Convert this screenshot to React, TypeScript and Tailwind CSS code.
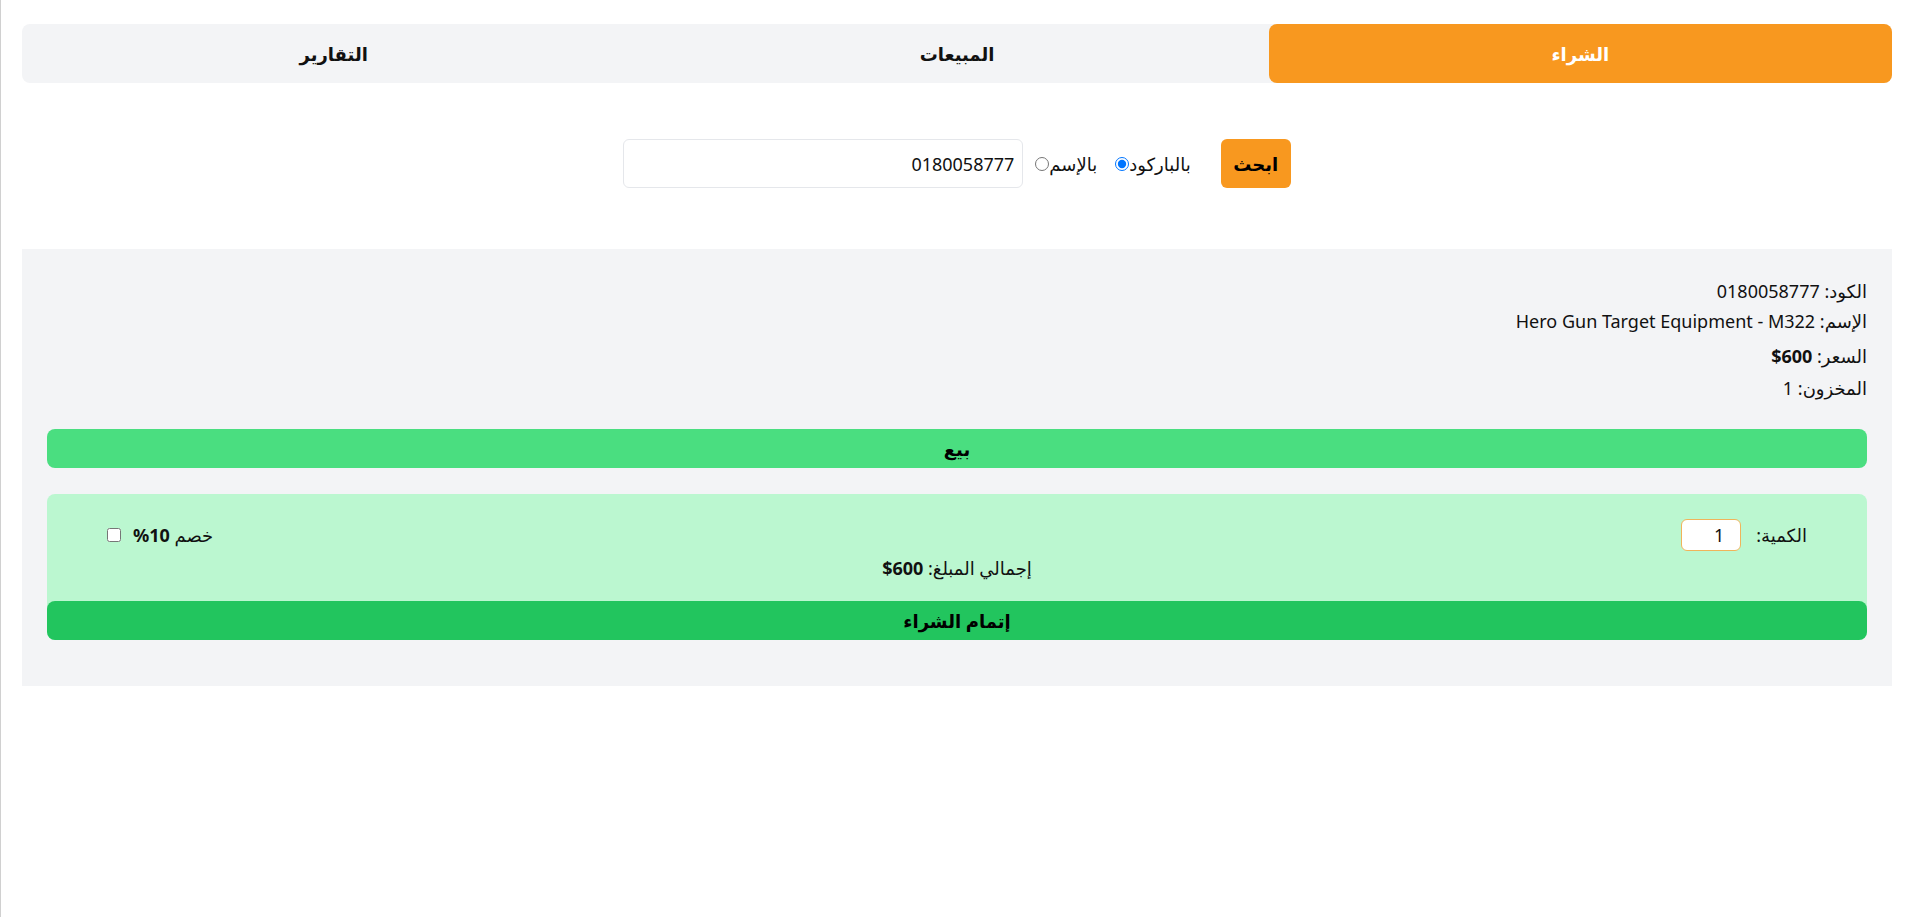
import React from "react";

export default function App() {
  return (
    <div
      dir="rtl"
      className="min-h-screen border-l border-[#d0d0d0] bg-white pl-[21px] pr-6 pt-6 text-[#111]"
      style={{ fontFamily: '"Noto Sans", "DejaVu Sans", sans-serif' }}
    >
      {/* Tabs */}
      <div className="flex h-[59px] rounded-lg bg-[#f3f4f6]">
        <button className="flex-1 rounded-lg bg-[#f8981f] text-lg font-bold text-white">الشراء</button>
        <button className="flex-1 text-lg font-bold text-[#111]">المبيعات</button>
        <button className="flex-1 text-lg font-bold text-[#111]">التقارير</button>
      </div>

      {/* Search */}
      <div className="mt-[56px] flex h-[49px] items-center justify-center">
        <button className="h-[49px] w-[70px] rounded-md bg-[#f8981f] text-lg font-bold text-black">ابحث</button>
        <label className="mr-[30px] flex items-center text-lg">
          بالباركود
          <input type="radio" name="mode" defaultChecked className="h-[14px] w-[14px]" />
        </label>
        <label className="mr-[18px] flex items-center text-lg">
          بالإسم
          <input type="radio" name="mode" className="h-[14px] w-[14px]" />
        </label>
        <input
          type="text"
          defaultValue="0180058777"
          className="mr-3 h-[49px] w-[400px] rounded-md border border-[#e5e7eb] bg-white px-2 text-lg outline-none"
        />
      </div>

      {/* Product panel */}
      <div className="mt-[61px] bg-[#f3f4f6] px-[25px] pb-[46px] pt-[27px]">
        <div className="text-lg">
          <p className="h-[30px] leading-[30px]">الكود: 0180058777</p>
          <p className="h-[30px] leading-[30px]">الإسم: Hero Gun Target Equipment - M322</p>
          <p className="mt-[5px] h-[30px] leading-[30px]">
            السعر: <span className="font-bold">600$</span>
          </p>
          <p className="mt-[2px] h-[30px] leading-[30px]">المخزون: 1</p>
        </div>

        <button className="mt-[26px] h-[39px] w-full rounded-lg bg-[#4ade80] text-lg font-bold text-black">بيع</button>

        <div className="mt-[26px] rounded-lg bg-[#bbf7d0] pt-[25px]">
          <div className="flex h-8 items-center justify-between px-[60px]">
            <div className="flex items-center">
              <span className="text-lg">الكمية:</span>
              <input
                type="text"
                defaultValue="1"
                className="mr-[15px] h-8 w-[60px] rounded-md border border-[#f0b45a] bg-white pr-[16px] text-right text-lg outline-none"
              />
            </div>
            <label className="flex items-center text-lg">
              <span>
                خصم <span className="font-bold">10%</span>
              </span>
              <input type="checkbox" className="mr-3 h-[14px] w-[14px]" />
            </label>
          </div>
          <p className="mb-[19px] mt-[3px] h-[28px] text-center text-lg leading-[28px]">
            إجمالي المبلغ: <span className="font-bold">600$</span>
          </p>
          <button className="h-[39px] w-full rounded-lg bg-[#22c55e] text-lg font-bold text-black">إتمام الشراء</button>
        </div>
      </div>
    </div>
  );
}
